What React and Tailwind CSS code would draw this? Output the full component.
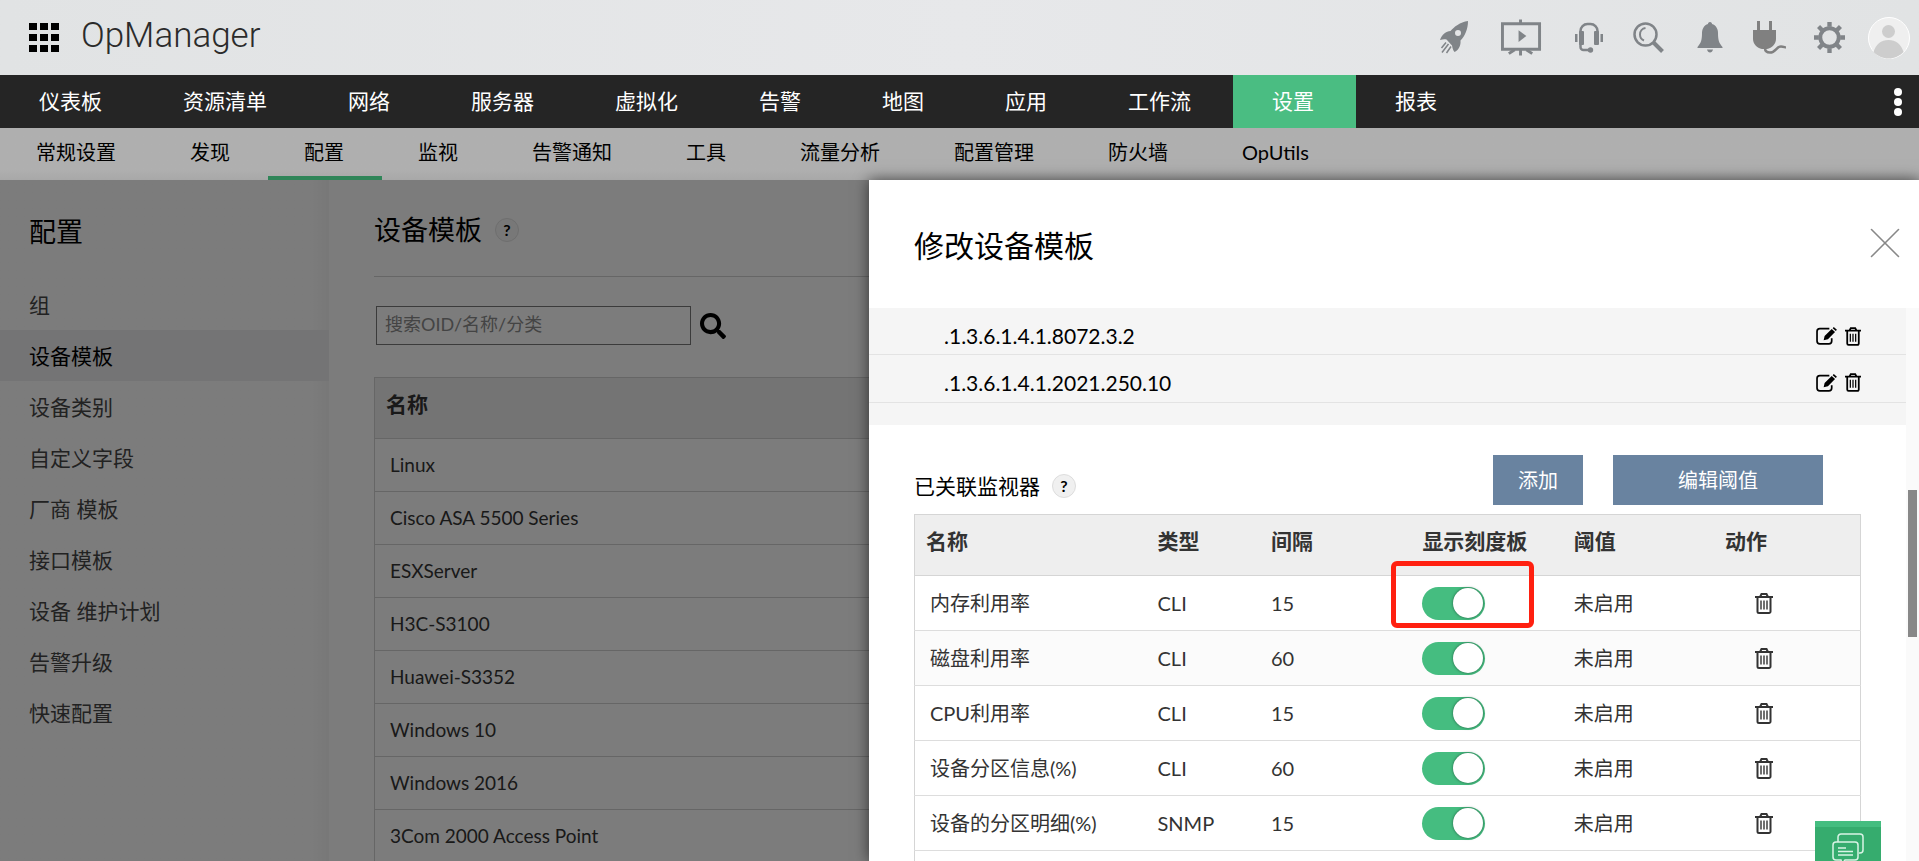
import { FaSearch } from 'react-icons/fa';
import { FiX } from 'react-icons/fi';

const MAIN_TABS = ['仪表板', '资源清单', '网络', '服务器', '虚拟化', '告警', '地图', '应用', '工作流', '设置', '报表'];
const SUB_TABS = ['常规设置', '发现', '配置', '监视', '告警通知', '工具', '流量分析', '配置管理', '防火墙', 'OpUtils'];
const SIDE_ITEMS = ['组', '设备模板', '设备类别', '自定义字段', '厂商 模板', '接口模板', '设备 维护计划', '告警升级', '快速配置'];
const TEMPLATES = ['Linux', 'Cisco ASA 5500 Series', 'ESXServer', 'H3C-S3100', 'Huawei-S3352', 'Windows 10', 'Windows 2016', '3Com 2000 Access Point'];
const OIDS = ['.1.3.6.1.4.1.8072.3.2', '.1.3.6.1.4.1.2021.250.10'];
const MONITORS = [
  { name: '内存利用率', type: 'CLI', interval: 15, marked: true },
  { name: '磁盘利用率', type: 'CLI', interval: 60, hover: true },
  { name: 'CPU利用率', type: 'CLI', interval: 15 },
  { name: '设备分区信息(%)', type: 'CLI', interval: 60 },
  { name: '设备的分区明细(%)', type: 'SNMP', interval: 15 },
];

function TrashIcon({ className }) {
  return (
    <svg viewBox="0 0 18 21" className={className} fill="none" stroke="currentColor" strokeWidth="2">
      <path d="M0 4h18M5 4 6.500 1h5L13 4M2.500 4v14.500a1.500 1.500 0 0 0 1.500 1.500h10a1.500 1.500 0 0 0 1.500-1.500V4" />
      <path d="M6 7.500v9M9 7.500v9M12 7.500v9" strokeWidth="1.400" />
    </svg>
  );
}

function EditIcon({ className }) {
  return (
    <svg viewBox="0 0 22 19" className={className}>
      <path d="M14 1.800H4A3 3 0 0 0 1 4.800v10a3 3 0 0 0 3 3h9.500a3 3 0 0 0 3-3V12" fill="none" stroke="currentColor" strokeWidth="1.800" />
      <path d="m8 14 1-4.500L16.500 2l3.500 3.200L12.500 13zM17.500 1.200 18.700 0 22 3l-1.200 1.300z" fill="currentColor" />
    </svg>
  );
}

function Help() {
  return (
    <button type="button" aria-label="帮助" className="size-6 rounded-full border border-[#ddd] bg-[#f0f0f0] text-base leading-none font-bold">?</button>
  );
}

function HeaderIcons() {
  return (
    <div className="flex items-center text-[#808488]">
      <button type="button" aria-label="快速入门" className="mr-[33px]">
        <svg viewBox="0 0 28 33" className="h-[33px] w-7" fill="currentColor">
          <path fillRule="evenodd" d="M28 0C20 1 14 6 10.500 10 6 10 2 13.500 0 19c3-1 5-1 6.500-.5l5.500 6c.5 2 .5 4 2.500 6.500 4-2 6.500-6 6-11.500C25 15 28 8 28 0zM18 9a3 3 0 1 1 0 6 3 3 0 0 1 0-6z" />
          <path d="M6 21.500 1.500 27M8.500 23 2 31.500M11 25.500 6.500 32" stroke="currentColor" strokeWidth="1.500" fill="none" />
        </svg>
      </button>
      <button type="button" aria-label="演示" className="mr-[33px]">
        <svg viewBox="0 0 42 37" className="h-[37px] w-[41px]" fill="none" stroke="currentColor">
          <path d="M1.500 4.500h38v26h-38z" strokeWidth="3" />
          <path d="M20 0v4M20 30v7M14 31l-6 4M26 31l6 4" strokeWidth="3" />
          <path d="M18 11v12l8-6z" fill="currentColor" stroke="none" />
        </svg>
      </button>
      <button type="button" aria-label="支持" className="mr-[30px]">
        <svg viewBox="0 0 28 31" className="h-[31px] w-7" fill="currentColor">
          <path d="M5.500 11V9a7 7 0 0 1 7-7h3a7 7 0 0 1 7 7v2M5.500 22v3a3 3 0 0 0 3 3H14" fill="none" stroke="currentColor" strokeWidth="2.500" />
          <rect x="4" y="9" width="5" height="14" rx="1" />
          <rect x="19" y="9" width="5" height="14" rx="1" />
          <rect x="0" y="12" width="2.500" height="8" />
          <rect x="25.500" y="12" width="2.500" height="8" />
          <circle cx="15.500" cy="28" r="2.700" />
        </svg>
      </button>
      <button type="button" aria-label="搜索" className="mr-[33px]">
        <svg viewBox="0 0 31 31" className="size-[31px]" fill="none" stroke="currentColor" strokeWidth="2.500">
          <circle cx="12.500" cy="12.500" r="11" />
          <path d="M12.500 6a6.500 6.500 0 0 0-5.500 6.500c0 3 1.500 5 4 6" strokeWidth="2" />
          <path d="m20.500 20.500 9 9" strokeWidth="4" />
        </svg>
      </button>
      <button type="button" aria-label="告警" className="mr-[30px]">
        <svg viewBox="0 0 26 31" className="h-[31px] w-[26px]" fill="currentColor">
          <path d="M13 0c1.500 0 2 1 2 2 4 1 6 5 6 9 0 7 1 10 4.500 14v1H.5v-1C4 21 5 18 5 11c0-4 2-8 6-9 0-1 .5-2 2-2zM10 27.500h6c-.5 2-1.500 3-3 3s-2.500-1-3-3z" />
        </svg>
      </button>
      <button type="button" aria-label="插件" className="mr-7">
        <svg viewBox="0 0 33 33" className="size-[33px]" fill="#808080">
          <path d="M4 0h3v9h9V0h3v9h4v9c0 5-4 9-9 10H9c-5-1-9-5-9-10V9h4z" />
          <path d="M12 27c0 3 2 4.500 5 4.500 6 0 6-6 11-6 2 0 3 .5 5 1" fill="none" stroke="#808080" strokeWidth="2.500" />
        </svg>
      </button>
      <button type="button" aria-label="设置" className="mr-[23px]">
        <svg viewBox="0 0 32 32" className="size-[31px]" fill="none" stroke="currentColor">
          <circle cx="16" cy="16" r="9.500" strokeWidth="4" />
          <path d="M16 0v5M16 27v5M0 16h5M27 16h5M4.700 4.700l3.500 3.500M23.800 23.800l3.500 3.500M4.700 27.300l3.500-3.500M23.800 8.200l3.500-3.500" strokeWidth="4.500" />
        </svg>
      </button>
      <button type="button" aria-label="用户">
        <svg viewBox="0 0 42 42" className="size-[42px]">
          <circle cx="21" cy="21" r="20.500" fill="#efefef" stroke="#fff" />
          <circle cx="20.500" cy="14.500" r="6.500" fill="#cdcdcd" />
          <path d="M5.500 35C8 27 13 23 20.500 23S33 27 35.500 35c-4 4-9 6.500-15 6.500S9.500 39 5.500 35z" fill="#cdcdcd" />
        </svg>
      </button>
    </div>
  );
}

function Header() {
  return (
    <header className="flex h-[75px] shrink-0 items-center justify-between bg-linear-to-r from-[#e1e3e4] via-[#e7e8ea] to-[#e1e3e4] pr-[9px] pl-[29px]">
      <div className="flex items-center gap-[22px]">
        <button type="button" aria-label="应用列表">
          <svg viewBox="0 0 30 29" className="h-[29px] w-[30px]">
            {[0, 11, 22].map(y => [0, 11, 22].map(x => <rect key={`${x}-${y}`} x={x} y={y} width="8" height="7" />))}
          </svg>
        </button>
        <h1 className="pb-1 font-[Roboto] text-[35px] leading-none font-light text-[#2b2b2b]">OpManager</h1>
      </div>
      <HeaderIcons />
    </header>
  );
}

function MainNav() {
  return (
    <nav className="flex h-[53px] shrink-0 items-stretch justify-between bg-[#252525] text-[21px] text-white">
      <div className="flex">
        {MAIN_TABS.map(tab => (
          <a key={tab} href="#" className={`flex items-center pr-[42px] pb-[2px] pl-[39px] ${tab === '设置' ? 'bg-[#4abd82]' : ''}`}>{tab}</a>
        ))}
      </div>
      <button type="button" aria-label="更多" className="mr-[17px] flex flex-col items-center justify-center gap-[2px]">
        <span className="size-2 rounded-full bg-white" />
        <span className="size-2 rounded-full bg-white" />
        <span className="size-2 rounded-full bg-white" />
      </button>
    </nav>
  );
}

function SubNav() {
  return (
    <nav className="flex h-[52px] shrink-0 bg-linear-to-b from-[#afafaf] from-80% to-[#a8a8a8] text-[20px] leading-6 text-black">
      {SUB_TABS.map(tab => (
        <a key={tab} href="#" className={`border-b-4 pt-3 pr-[38px] pl-9 ${tab === '配置' ? 'border-[#2f8558]' : 'border-transparent'}`}>{tab}</a>
      ))}
    </nav>
  );
}

function Sidebar() {
  return (
    <aside className="w-[329px] shrink-0 bg-linear-to-l from-[#f0f0f0] to-[#f8f8f8] to-5% pt-8">
      <h2 className="pl-[29px] text-[27px] leading-10 text-black">配置</h2>
      <ul className="mt-[27px] text-[21px]">
        {SIDE_ITEMS.map(item => (
          <li key={item}>
            <a href="#" className={`flex h-[51px] items-center pl-[29px] ${item === '设备模板' ? 'bg-[#e8e8eb] text-black' : 'text-[#444]'}`}>{item}</a>
          </li>
        ))}
      </ul>
    </aside>
  );
}

function TemplateList() {
  return (
    <main className="min-w-0 flex-1 bg-[#f8f8f8] pl-[45px]">
      <div className="flex h-[97px] items-center gap-[13px] border-b border-[#ccc] pt-1">
        <h2 className="text-[27px] text-black">设备模板</h2>
        <Help />
      </div>
      <div className="mt-[29px] ml-[2px] flex items-center gap-[9px]">
        <input type="text" aria-label="搜索" placeholder="搜索OID/名称/分类" className="h-[39px] w-[315px] border border-[#777] px-2 pb-1 text-lg placeholder:text-[#888]" />
        <button type="button" aria-label="搜索"><FaSearch className="size-[26px] text-black" /></button>
      </div>
      <table className="mt-8 w-full border border-[#ccc]">
        <thead>
          <tr className="h-[61px] border-b border-[#ccc] bg-[#e8e8e8]">
            <th className="pb-2 pl-[11px] text-left text-[21px] text-[#333]">名称</th>
          </tr>
        </thead>
        <tbody className="text-[19px] text-[#333]">
          {TEMPLATES.map(name => (
            <tr key={name} className="h-[53px] border-b border-[#ccc]"><td className="pl-[15px]">{name}</td></tr>
          ))}
        </tbody>
      </table>
    </main>
  );
}

function Toggle({ label }) {
  return (
    <label className="relative block h-[33px] w-[63px] rounded-full bg-[#45bd80]">
      <input type="checkbox" defaultChecked aria-label={label} className="absolute inset-0 size-full opacity-0" />
      <span className="absolute top-px right-[2px] size-[30px] rounded-full bg-white shadow-[0_0_3px_rgba(0,0,0,0.500)]" />
    </label>
  );
}

function MonitorTable() {
  return (
    <table className="w-full table-fixed border border-[#d5d5d5] text-left text-[20px] text-[#333]">
      <thead>
        <tr className="h-[61px] border-b border-[#d5d5d5] bg-[#eee] text-[21px] [&>th]:pb-2">
          <th className="w-[243px] pl-[11px]">名称</th>
          <th className="w-[12%]">类型</th>
          <th className="w-[16%]">间隔</th>
          <th className="w-[16%]">显示刻度板</th>
          <th className="w-[16%]">阈值</th>
          <th>动作</th>
        </tr>
      </thead>
      <tbody>
        {MONITORS.map(m => (
          <tr key={m.name} className={`h-[55px] border-b border-[#ddd] ${m.hover ? 'bg-[#fbfbfb]' : 'bg-white'}`}>
            <td className="pl-[15px]">{m.name}</td>
            <td>{m.type}</td>
            <td>{m.interval}</td>
            <td>
              <div className="relative">
                <Toggle label={`显示刻度板 ${m.name}`} />
                {m.marked && <div className="pointer-events-none absolute -top-[26px] -left-[31px] h-[67px] w-[143px] rounded-md border-5 border-[#ff2010]" />}
              </div>
            </td>
            <td>未启用</td>
            <td className="pl-[30px]">
              <button type="button" aria-label={`删除 ${m.name}`} className="block"><TrashIcon className="h-[21px] w-[18px]" /></button>
            </td>
          </tr>
        ))}
        <tr className="h-[55px]"><td colSpan={6} /></tr>
      </tbody>
    </table>
  );
}

function EditPanel() {
  return (
    <section className="absolute inset-y-0 right-0 flex w-[1050px] flex-col bg-white shadow-[0_0_14px_rgba(0,0,0,0.600)]">
      <div className="flex h-32 shrink-0 items-center justify-between pr-5 pl-[45px]">
        <h2 className="pt-[2px] text-[30px] text-black">修改设备模板</h2>
        <button type="button" aria-label="关闭" className="pb-[2px]"><FiX className="-mx-[13px] size-[54px] text-[#888]" strokeWidth="0.700" /></button>
      </div>
      <div className="flex min-h-0 flex-1">
        <div className="min-w-0 flex-1 overflow-hidden">
          <ul className="bg-[#f5f5f5] pb-[22px] text-[21px] text-black">
            {OIDS.map(oid => (
              <li key={oid} className="flex h-[47px] items-center justify-between border-b border-[#e3e3e3] pt-3 pr-[45px] pb-[2px] pl-[75px] nth-2:h-12 nth-2:pb-1">
                {oid}
                <span className="flex gap-2">
                  <button type="button" aria-label={`编辑 ${oid}`}><EditIcon className="h-[18px] w-[21px]" /></button>
                  <button type="button" aria-label={`删除 ${oid}`}><TrashIcon className="h-[19px] w-4" /></button>
                </span>
              </li>
            ))}
          </ul>
          <div className="flex items-start pt-[30px] pr-[83px] pl-[45px]">
            <div className="mt-4 flex items-center gap-3">
              <h3 className="text-[21px] leading-[30px] text-black">已关联监视器</h3>
              <Help />
            </div>
            <div className="ml-auto flex gap-[30px] text-[20px] text-white">
              <button type="button" className="h-[50px] w-[90px] bg-[#6983a0]">添加</button>
              <button type="button" className="h-[50px] w-[210px] bg-[#6983a0]">编辑阈值</button>
            </div>
          </div>
          <div className="mt-[9px] px-[45px]">
            <MonitorTable />
          </div>
        </div>
        <div className="w-[13px] bg-[#fafafa] px-[2px] pt-[182px]">
          <div className="h-[147px] bg-[#888]" />
        </div>
      </div>
    </section>
  );
}

function ChatButton() {
  return (
    <button type="button" aria-label="聊天" className="absolute right-[38px] bottom-0 flex h-10 w-[66px] justify-center overflow-hidden border-t-6 border-[#45bd80] bg-[#36ac6e] pt-[6px]">
      <svg viewBox="0 0 32 32" className="size-8 shrink-0" fill="none" stroke="#d9f3e5" strokeWidth="1.500">
        <path d="M6 9V4a3 3 0 0 1 3-3h19a3 3 0 0 1 3 3v13a3 3 0 0 1-3 3h-1" />
        <path d="M4 9h19a3 3 0 0 1 3 3v12a3 3 0 0 1-3 3H13l-3 4-1-4H4a3 3 0 0 1-3-3V12a3 3 0 0 1 3-3zM6 15h8M6 18.500h15M6 22h15" />
      </svg>
    </button>
  );
}

export default function App() {
  return (
    <div className="flex h-screen flex-col overflow-hidden font-[Lato,'Noto_Sans_CJK_SC',sans-serif]">
      <Header />
      <MainNav />
      <SubNav />
      <div className="relative flex min-h-0 flex-1">
        <Sidebar />
        <TemplateList />
        <div className="absolute inset-0 bg-black/50" />
        <EditPanel />
        <ChatButton />
      </div>
    </div>
  );
}
